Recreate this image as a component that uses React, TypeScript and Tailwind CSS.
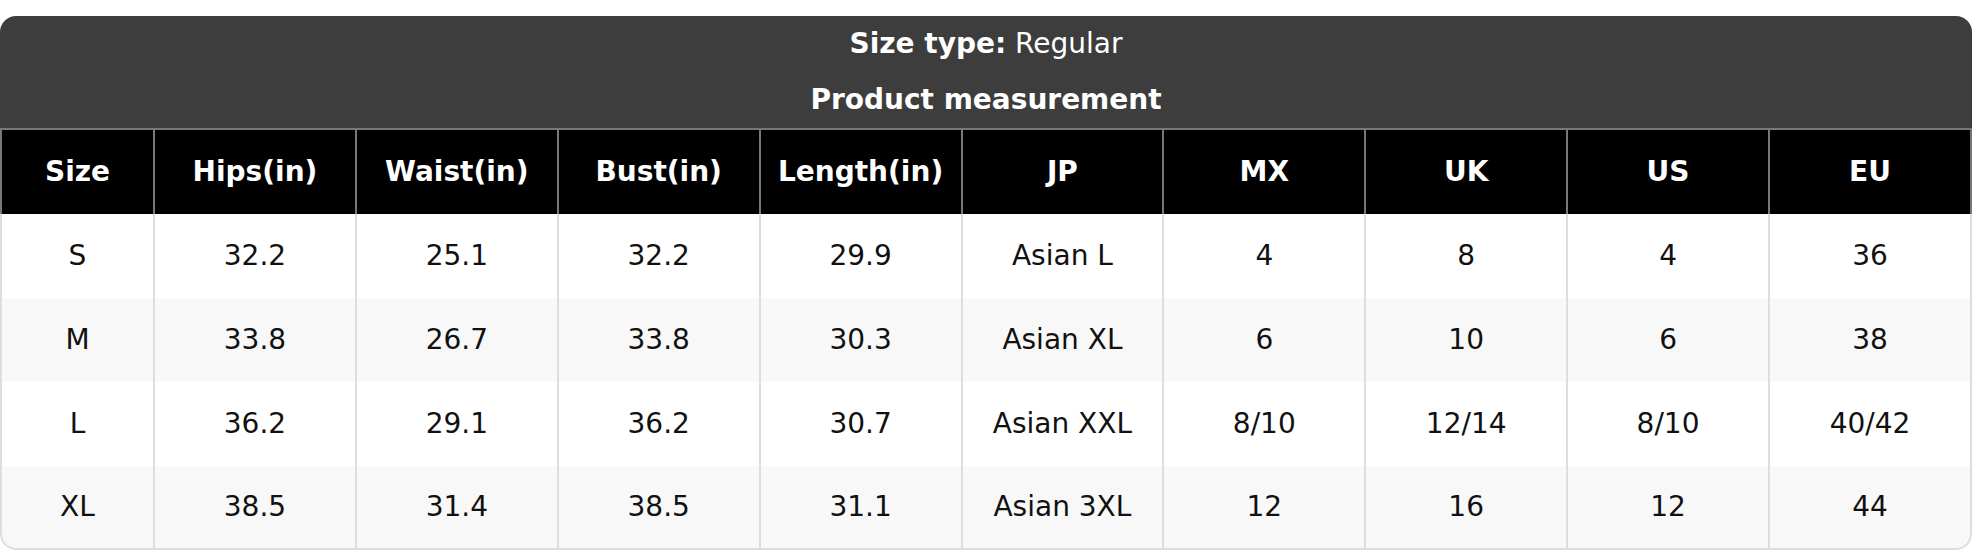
import React from "react";

const headers = ["Size", "Hips(in)", "Waist(in)", "Bust(in)", "Length(in)", "JP", "MX", "UK", "US", "EU"];
const rows = [
  ["S", "32.2", "25.1", "32.2", "29.9", "Asian L", "4", "8", "4", "36"],
  ["M", "33.8", "26.7", "33.8", "30.3", "Asian XL", "6", "10", "6", "38"],
  ["L", "36.2", "29.1", "36.2", "30.7", "Asian XXL", "8/10", "12/14", "8/10", "40/42"],
  ["XL", "38.5", "31.4", "38.5", "31.1", "Asian 3XL", "12", "16", "12", "44"],
];

export default function App() {
  return (
    <div className="w-[1972px] h-[552px] bg-white pt-[16px] font-['DejaVu_Sans',sans-serif]">
      <div className="rounded-[16px] overflow-hidden">
        <div className="bg-[#3d3d3d] text-white text-[28px] h-[112px] flex flex-col items-center">
          <div className="h-[56px] pt-[12px] leading-[32px]">
            <span className="font-bold">Size type:</span> Regular
          </div>
          <div className="h-[56px] pt-[12px] leading-[32px] font-bold">Product measurement</div>
        </div>
        <table className="w-full border-separate border-spacing-0 table-fixed text-[28px]">
          <colgroup>
            <col className="w-[155px]" />
            {headers.slice(1).map((h) => (
              <col key={h} />
            ))}
          </colgroup>
          <thead>
            <tr>
              {headers.map((h, i) => (
                <th
                  key={h}
                  className={`h-[86px] bg-black text-white font-bold leading-[32px] border-t-2 border-r-2 border-[#777] ${i === 0 ? "border-l-2" : ""}`}
                >
                  {h}
                </th>
              ))}
            </tr>
          </thead>
          <tbody>
            {rows.map((r, ri) => (
              <tr key={ri} className={ri % 2 === 1 ? "bg-[#f8f8f8]" : "bg-white"}>
                {r.map((c, ci) => (
                  <td
                    key={ci}
                    className={`h-[84px] text-center font-normal leading-[32px] text-[#111] border-r-2 border-[#ddd] ${ci === 0 ? "border-l-2" : ""} ${ri === rows.length - 1 ? "border-b-2" : ""} ${ri === rows.length - 1 && ci === 0 ? "rounded-bl-[16px]" : ""} ${ri === rows.length - 1 && ci === r.length - 1 ? "rounded-br-[16px]" : ""}`}
                  >
                    {c}
                  </td>
                ))}
              </tr>
            ))}
          </tbody>
        </table>
      </div>
    </div>
  );
}
